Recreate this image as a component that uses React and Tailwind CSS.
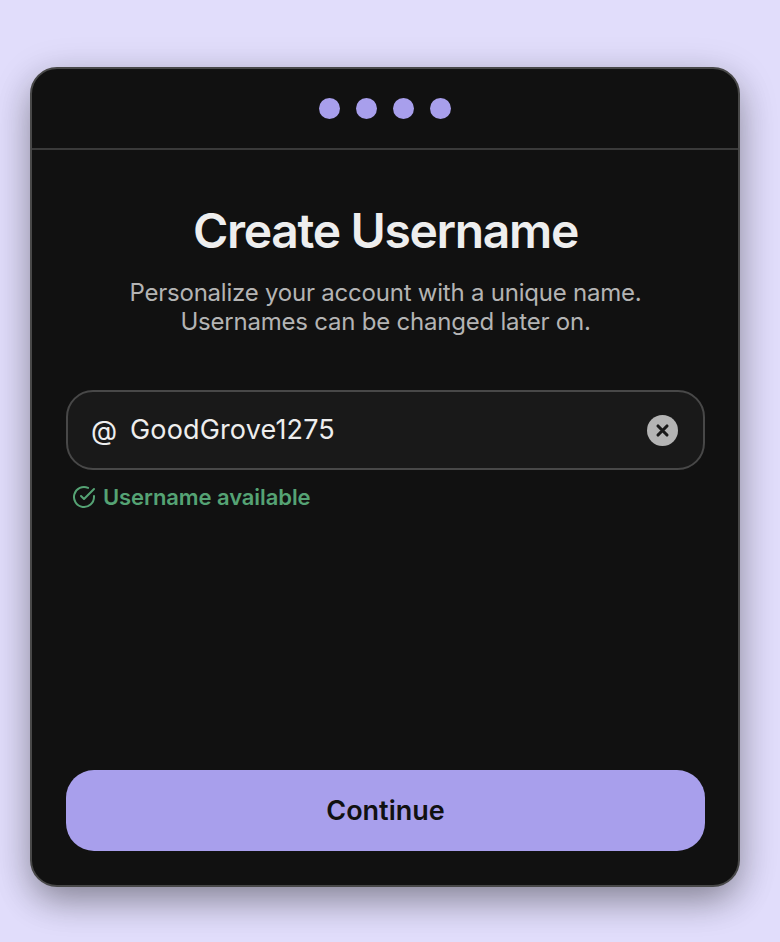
export default function App() {
  return (
    <div className="h-[942px] w-[780px] overflow-hidden bg-[#e1ddfb] pl-[30px] pt-[67px] font-['Inter',sans-serif]">
      <main className="flex h-[820px] w-[710px] flex-col rounded-[27px] border-2 border-[#484848] bg-[#111111] shadow-[0_16px_36px_-4px_rgba(0,0,0,0.32),0_8px_40px_rgba(0,0,0,0.16)]">
        <header className="flex h-[81px] shrink-0 items-center justify-center gap-[16.3px] border-b-2 border-[#3a3a3a]">
          <span className="size-[20.7px] rounded-full bg-[#a89fec]" />
          <span className="size-[20.7px] rounded-full bg-[#a89fec]" />
          <span className="size-[20.7px] rounded-full bg-[#a89fec]" />
          <span className="size-[20.7px] rounded-full bg-[#a89fec]" />
        </header>
        <section className="flex flex-1 flex-col pb-[34px] pl-[34px] pr-[33px]">
          <h1 className="mt-[52px] text-center text-[48px] font-semibold leading-[58px] tracking-[-1.32px] text-[#eeeeee]">Create Username</h1>
          <p className="mt-[18px] whitespace-nowrap text-center text-[24px] leading-[29px] tracking-[-0.22px] text-[#b4b4b4]">
            Personalize your account with a unique name.<br />Usernames can be changed later on.
          </p>
          <div className="mt-[54px] flex h-[80px] items-center rounded-[27px] border-2 border-[#484848] bg-[#191919] pl-[23px] pr-[25px] text-[27px] text-[#eeeeee]">
            <span className="w-[39px] pt-[2px]">@</span>
            <span className="flex-1 pt-px tracking-[0.15px]">GoodGrove1275</span>
            <svg width="31" height="31" viewBox="0 0 31 31">
              <circle cx="15.5" cy="15.5" r="15.5" fill="#b4b4b4" />
              <path d="M11 11l9 9M20 11l-9 9" stroke="#191919" strokeWidth="3.1" strokeLinecap="round" />
            </svg>
          </div>
          <div className="mt-[13px] flex h-[28px] items-center gap-[7px] pl-[6px] text-[22px] font-semibold tracking-[-0.08px] text-[#55a374]">
            <svg width="24" height="24" viewBox="0 0 24 24" fill="none" stroke="currentColor" strokeWidth="2" strokeLinecap="round" strokeLinejoin="round">
              <path d="M22 11.08V12a10 10 0 1 1-5.93-9.14" />
              <path d="m9 11 3 3L22 4" />
            </svg>
            <span>Username available</span>
          </div>
          <button className="mt-auto h-[81px] rounded-[28px] bg-[#a89fec] pt-px text-[27px] font-semibold text-[#111111]">Continue</button>
        </section>
      </main>
    </div>
  );
}
